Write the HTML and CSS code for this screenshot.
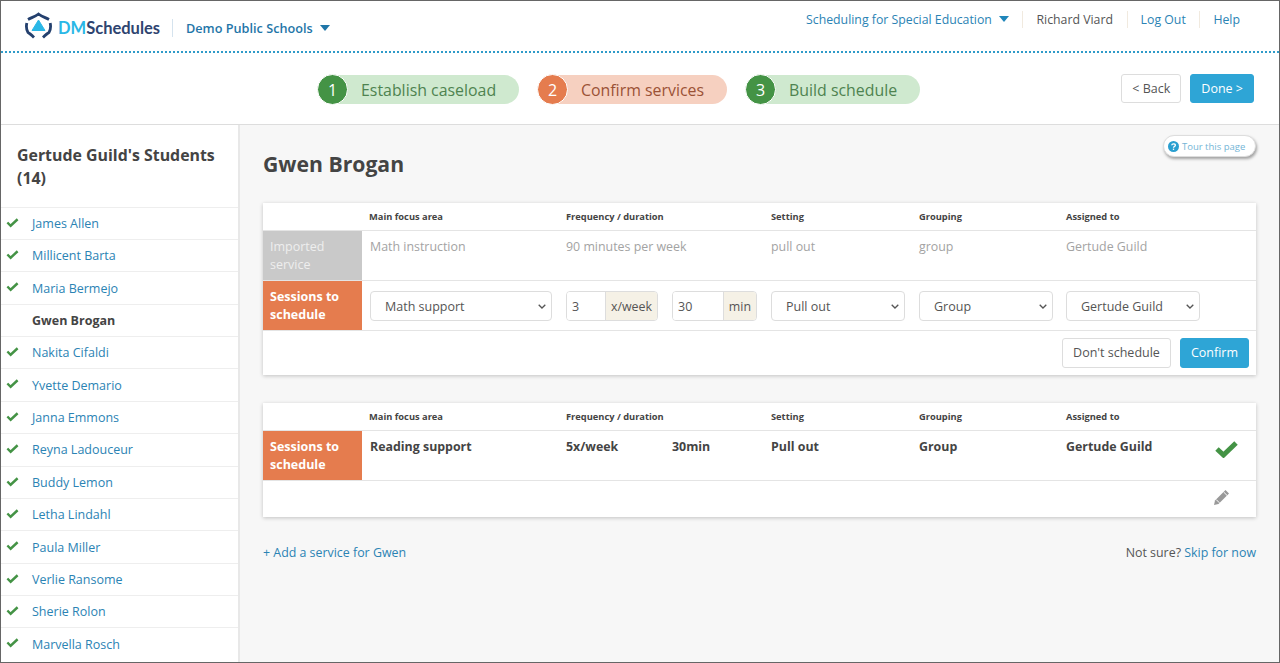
FILE: index.html
```html
<!DOCTYPE html>
<html lang="en">
<head>
<meta charset="utf-8">
<title>DMSchedules</title>
<link rel="stylesheet" href="styles.css">
</head>
<body>
<div class="frame">
  <header class="topbar">
    <div class="brand">
      <svg class="logo" width="27" height="28" viewBox="0 0 27 28">
        <g fill="none" stroke="#24406e" stroke-width="2.8">
          <path d="M3 7.5 C6.5 5.5 9.5 5 13.5 2 C17.5 5 20.5 5.5 24 7.5"/>
          <path d="M1.8 11 C1 15 1.4 18 3 20.5 C5 21.5 7 23.5 9 25.5"/>
          <path d="M25.2 11 C26 15 25.6 18 24 20.5 C22 21.5 20 23.5 18 25.5"/>
        </g>
        <path d="M13.5 8 L20 18.5 H7 Z" fill="#2ab7e6" stroke="#2ab7e6" stroke-width="1" stroke-linejoin="round"/>
      </svg>
      <span class="wordmark"><span class="dm">DM</span>Schedules</span>
      <span class="brand-sep"></span>
      <a class="district">Demo Public Schools<i class="caret dark"></i></a>
    </div>
    <nav class="topnav">
      <a class="navlink">Scheduling for Special Education<i class="caret"></i></a>
      <span class="user">Richard Viard</span>
      <a class="navlink">Log Out</a>
      <a class="navlink">Help</a>
    </nav>
  </header>

  <section class="stepbar">
    <ol class="steps">
      <li class="step green"><b>1</b><span>Establish caseload</span></li>
      <li class="step orange"><b>2</b><span>Confirm services</span></li>
      <li class="step green"><b>3</b><span>Build schedule</span></li>
    </ol>
    <div class="stepbtns">
      <button class="btn">&lt; Back</button>
      <button class="btn primary">Done &gt;</button>
    </div>
  </section>

  <div class="body">
    <aside class="sidebar">
      <h2>Gertude Guild's Students (14)</h2>
      <ul class="students">
        <li><svg class="tick" viewBox="0 0 14 11"><path d="M1.5 5.5 L5 9 L12.5 2" /></svg><a>James Allen</a></li>
        <li><svg class="tick" viewBox="0 0 14 11"><path d="M1.5 5.5 L5 9 L12.5 2" /></svg><a>Millicent Barta</a></li>
        <li><svg class="tick" viewBox="0 0 14 11"><path d="M1.5 5.5 L5 9 L12.5 2" /></svg><a>Maria Bermejo</a></li>
        <li class="current"><a>Gwen Brogan</a></li>
        <li><svg class="tick" viewBox="0 0 14 11"><path d="M1.5 5.5 L5 9 L12.5 2" /></svg><a>Nakita Cifaldi</a></li>
        <li><svg class="tick" viewBox="0 0 14 11"><path d="M1.5 5.5 L5 9 L12.5 2" /></svg><a>Yvette Demario</a></li>
        <li><svg class="tick" viewBox="0 0 14 11"><path d="M1.5 5.5 L5 9 L12.5 2" /></svg><a>Janna Emmons</a></li>
        <li><svg class="tick" viewBox="0 0 14 11"><path d="M1.5 5.5 L5 9 L12.5 2" /></svg><a>Reyna Ladouceur</a></li>
        <li><svg class="tick" viewBox="0 0 14 11"><path d="M1.5 5.5 L5 9 L12.5 2" /></svg><a>Buddy Lemon</a></li>
        <li><svg class="tick" viewBox="0 0 14 11"><path d="M1.5 5.5 L5 9 L12.5 2" /></svg><a>Letha Lindahl</a></li>
        <li><svg class="tick" viewBox="0 0 14 11"><path d="M1.5 5.5 L5 9 L12.5 2" /></svg><a>Paula Miller</a></li>
        <li><svg class="tick" viewBox="0 0 14 11"><path d="M1.5 5.5 L5 9 L12.5 2" /></svg><a>Verlie Ransome</a></li>
        <li><svg class="tick" viewBox="0 0 14 11"><path d="M1.5 5.5 L5 9 L12.5 2" /></svg><a>Sherie Rolon</a></li>
        <li><svg class="tick" viewBox="0 0 14 11"><path d="M1.5 5.5 L5 9 L12.5 2" /></svg><a>Marvella Rosch</a></li>
      </ul>
    </aside>

    <main class="main">
      <a class="tour">
        <svg width="11" height="11" viewBox="0 0 10 10"><circle cx="5" cy="5" r="5" fill="#2a9fd0"/><path d="M3.4 3.9 C3.5 2.1 6.7 2.1 6.7 3.8 C6.7 5 5 4.9 5 6.1" fill="none" stroke="#fff" stroke-width="1.2"/><rect x="4.4" y="6.9" width="1.2" height="1.2" fill="#fff"/></svg>
        Tour this page
      </a>
      <h1>Gwen Brogan</h1>

      <section class="card">
        <div class="row head">
          <div class="label"></div>
          <div class="cell">Main focus area</div>
          <div class="cell">Frequency / duration</div>
          <div class="cell">Setting</div>
          <div class="cell">Grouping</div>
          <div class="cell">Assigned to</div>
        </div>
        <div class="row data imported">
          <div class="label grey">Imported service</div>
          <div class="cell">Math instruction</div>
          <div class="cell">90 minutes per week</div>
          <div class="cell">pull out</div>
          <div class="cell">group</div>
          <div class="cell">Gertude Guild</div>
        </div>
        <div class="row data editing">
          <div class="label orange-bg">Sessions to schedule</div>
          <div class="cell"><select class="sel w182"><option>Math support</option></select></div>
          <div class="cell freq">
            <div class="addon w92"><input value="3" aria-label="times per week"><span>x/week</span></div>
            <div class="addon w85"><input value="30" aria-label="minutes"><span>min</span></div>
          </div>
          <div class="cell"><select class="sel w133"><option>Pull out</option></select></div>
          <div class="cell"><select class="sel w133"><option>Group</option></select></div>
          <div class="cell"><select class="sel w133"><option>Gertude Guild</option></select></div>
        </div>
        <div class="actions">
          <button class="btn">Don't schedule</button>
          <button class="btn primary">Confirm</button>
        </div>
      </section>

      <section class="card second">
        <div class="row head">
          <div class="label"></div>
          <div class="cell">Main focus area</div>
          <div class="cell">Frequency / duration</div>
          <div class="cell">Setting</div>
          <div class="cell">Grouping</div>
          <div class="cell">Assigned to</div>
        </div>
        <div class="row data done">
          <div class="label orange-bg">Sessions to schedule</div>
          <div class="cell">Reading support</div>
          <div class="cell split"><span>5x/week</span><span>30min</span></div>
          <div class="cell">Pull out</div>
          <div class="cell">Group</div>
          <div class="cell lastcell">Gertude Guild
            <svg class="bigtick" width="23" height="18" viewBox="0 0 23 18"><path d="M2 9 L8.5 15 L21 3" fill="none" stroke="#449345" stroke-width="5"/></svg>
          </div>
        </div>
        <div class="editbar">
          <svg width="17" height="17" viewBox="0 0 17 17"><path d="M12.5 1 L16 4.5 L5.5 15 L1 16 L2 11.5 Z" fill="#999"/><path d="M10.6 3 L14 6.4" stroke="#fff" stroke-width="1"/><path d="M3.2 10.6 L6.4 13.8" stroke="#fff" stroke-width="1"/></svg>
        </div>
      </section>

      <div class="footlinks">
        <a>+ Add a service for Gwen</a>
        <span>Not sure? <a>Skip for now</a></span>
      </div>
    </main>
  </div>
</div>
</body>
</html>
```

FILE: styles.css
```css
* { box-sizing: border-box; }
html, body { margin: 0; padding: 0; height: 100%; overflow: hidden; }
body { font-family: "Open Sans", sans-serif; font-size: 13px; color: #444; background: #fff; }
a { color: #2b83b4; text-decoration: none; }
ul, ol { list-style: none; margin: 0; padding: 0; }

.frame { width: 1280px; height: 663px; border: 1px solid #666; display: flex; flex-direction: column; overflow: hidden; }

.topbar { height: 52px; flex: none; display: flex; justify-content: space-between; border-bottom: 2px dotted #2f9bc9; padding: 0 39px 0 24px; }
.brand { display: flex; align-items: center; height: 50px; padding-top: 3px; }
.logo { display: block; margin-right: 6px; margin-top: -3px; }
.wordmark { font-family: Lato, sans-serif; font-size: 16.5px; font-weight: 700; color: #2e4470; width: 106px; white-space: nowrap; }
.dm { color: #2ab7e6; }
.brand-sep { width: 1px; height: 18px; background: #d5e3ee; margin: 0 13px 0 8px; }
.district { font-size: 12.7px; font-weight: 600; color: #1f76a8; }
.caret { display: inline-block; border: 5px solid transparent; border-top: 6px solid #1f86ba; border-bottom: 0; margin-left: 7px; vertical-align: 2px; }
.caret.dark { border-top-color: #1f76a8; }

.topnav { display: flex; align-items: flex-start; padding-top: 10px; font-size: 12.3px; }
.topnav > * { height: 17px; line-height: 17px; padding: 0 13.6px 0 13px; border-left: 1px solid #f1eadf; }
.topnav > :first-child { border-left: 0; }
.topnav > :last-child { padding-right: 0; }
.user { color: #555; }
.navlink { color: #2b83b4; }

.stepbar { height: 72px; flex: none; border-bottom: 1px solid #ddd; display: flex; padding: 21px 25px 0 317px; justify-content: space-between; }
.steps { display: flex; gap: 19px; padding-top: 1px; }
.step { height: 29px; border-radius: 15px; display: flex; align-items: center; font-size: 15.9px; }
.step b { width: 31px; height: 31px; margin: -1px 0 -1px -1px; border-radius: 50%; border: 1px solid #fff; display: flex; align-items: center; justify-content: center; color: #fff; font-weight: 400; font-size: 16px; }
.step span { padding-left: 13px; }
.step.green { background: #cfe9cf; color: #4e8350; }
.step.green b { background: #449345; }
.step.orange { background: #f6d0c0; color: #9b5236; }
.step.orange b { background: #e57c4e; }
.step:nth-child(1) { width: 201px; }
.step:nth-child(2) { width: 189px; }
.step:nth-child(3) { width: 174px; }
.stepbtns { display: flex; gap: 9px; height: 29px; }

.btn { font: 12.5px "Open Sans", sans-serif; color: #555; background: #fff; border: 1px solid #ddd; border-radius: 3px; height: 29px; padding: 0 10px 1px; }
.btn.primary { background: #2ea5d6; border-color: #2ea5d6; color: #fff; }

.body { flex: 1; display: flex; min-height: 0; background: #f7f7f7; }

.sidebar { width: 239px; flex: none; background: #fff; border-right: 2px solid #e8e8e8; overflow: hidden; }
.sidebar h2 { margin: 0; padding: 19px 16px 18px 16px; font-size: 15.9px; line-height: 23px; font-weight: 700; color: #444; height: 81.6px; }
.students li { height: 32.38px; border-top: 1px solid #eee; display: flex; align-items: center; position: relative; padding-left: 31px; font-size: 12.5px; }
.students li.current a { color: #444; font-weight: 700; }
.tick { position: absolute; left: 5px; top: 9px; width: 13px; height: 11px; fill: none; stroke: #449345; stroke-width: 2.6; }

.main { flex: 1; padding: 0 23px; position: relative; min-width: 0; }
h1 { margin: 0; padding-top: 25px; height: 78px; font-size: 21.2px; line-height: 27px; font-weight: 700; color: #444; }

.tour { position: absolute; right: 23px; top: 10px; height: 22px; width: 93px; border-radius: 11px; background: #fff; border: 1px solid #ddd; box-shadow: 1px 2px 3px rgba(0,0,0,.35); display: flex; align-items: center; gap: 3px; padding-left: 4px; font-size: 9.5px; color: #74b5d6; white-space: nowrap; }

.card { background: #fff; box-shadow: 0 1px 4px rgba(0,0,0,.22); font-size: 12.4px; }
.card.second { margin-top: 28px; }
.row { display: grid; grid-template-columns: 99px 197px 205px 148px 147px 1fr; border-bottom: 1px solid #e4e4e4; }
.row .cell { padding-left: 7px; }
.row .cell:nth-child(2) { padding-left: 8px; }
.head .cell:nth-child(2) { padding-left: 7px; }
.head { height: 28px; font-size: 9.3px; font-weight: 700; color: #444; align-items: center; padding-bottom: 1px; }
.data { height: 50px; }
.label { padding: 7px; line-height: 17.5px; color: #fff; font-size: 12.5px; }
.grey { background: #c9c9c9; color: #eee; }
.orange-bg { background: #e57c4e; font-weight: 700; }
.imported .cell { color: #a3a3a3; padding-top: 7px; line-height: 17.5px; }
.editing .cell { padding-top: 10px; }
.freq { display: flex; gap: 14px; }

.sel { appearance: none; height: 30px; font: 12.5px "Open Sans", sans-serif; color: #555; border: 1px solid #ddd; border-radius: 4px; padding: 0 14px; display: block; background: #fff url("data:image/svg+xml,%3Csvg xmlns='http://www.w3.org/2000/svg' width='8' height='5'%3E%3Cpath d='M.7.7 4 4 7.3.7' fill='none' stroke='%23555' stroke-width='1.3'/%3E%3C/svg%3E") no-repeat right 5px center; }
.w182 { width: 182px; }
.w133 { width: 134px; }

.addon { display: flex; height: 30px; border: 1px solid #ddd; border-radius: 4px; overflow: hidden; }
.addon input { flex: 1; min-width: 0; border: 0; padding: 0 5px; font: 12.5px "Open Sans", sans-serif; color: #555; outline: 0; }
.addon span { background: #f5f1e6; border-left: 1px solid #ddd; display: flex; align-items: center; padding: 0 5px; color: #555; }
.w92 { width: 92px; }
.w85 { width: 85px; }

.actions { height: 44px; display: flex; justify-content: flex-end; align-items: center; gap: 9px; padding: 0 7px; }
.actions .btn { height: 30px; }

.done .cell { font-weight: 700; color: #444; padding-top: 7px; line-height: 17.5px; }
.split { display: flex; }
.split span:first-child { width: 106px; }
.lastcell { position: relative; }
.bigtick { position: absolute; left: 156px; top: 9px; }
.editbar { height: 36px; display: flex; justify-content: flex-end; align-items: center; padding: 0 26px 4px 0; }

.footlinks { display: flex; justify-content: space-between; margin-top: 27px; font-size: 12.4px; color: #555; line-height: 17px; }
```
